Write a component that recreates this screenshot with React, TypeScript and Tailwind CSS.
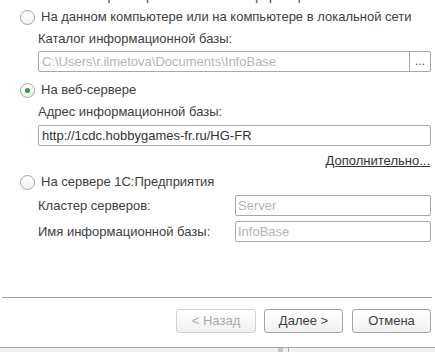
import React from "react";

function Radio({ checked }: { checked?: boolean }) {
  return (
    <span className="w-[15px] h-[15px] rounded-full border border-[#a3a3a3] bg-gradient-to-b from-white to-[#f3f3f3] flex items-center justify-center shrink-0">
      {checked && <span className="w-[5px] h-[5px] rounded-full bg-[#3a9a4a]" />}
    </span>
  );
}

function Btn({ children, disabled, w }: { children: React.ReactNode; disabled?: boolean; w: string }) {
  return (
    <div
      className={
        "h-[24px] rounded-[3px] border flex items-center justify-center bg-gradient-to-b from-white to-[#f1f1f1] " +
        w +
        " " +
        (disabled ? "border-[#d2d2d2] text-[#a9a9a9]" : "border-[#a5a5a5] text-[#404040]")
      }
    >
      {children}
    </div>
  );
}

export default function App() {
  return (
    <div
      className="relative w-[435px] h-[352px] bg-white overflow-hidden flex flex-col text-[13px] text-[#404040]"
      style={{ fontFamily: '"Liberation Sans", Arial, sans-serif' }}
    >
      <div className="flex-1 flex flex-col">
        <div className="h-[4px] overflow-hidden pl-[40px]">
          <div className="leading-[16px] -mt-[12px] whitespace-nowrap">
            Укажите вариант расположения информационной базы:
          </div>
        </div>
        <div className="h-[26px] flex items-center pl-[20px] gap-[6px]">
          <Radio />
          <span>На данном компьютере или на компьютере в локальной сети</span>
        </div>
        <div className="h-[18px] flex items-center pl-[38px]">Каталог информационной базы:</div>
        <div className="mt-[3px] h-[21px] ml-[38px] w-[393px] flex border border-[#a8a8a8] rounded-[2px]">
          <div className="flex-1 flex items-center pl-[3px] text-[#b5b5b5] overflow-hidden whitespace-nowrap">
            C:\Users\r.ilmetova\Documents\InfoBase
          </div>
          <div className="w-[21px] border-l border-[#a8a8a8] flex items-center justify-center text-[#555] text-[12px] leading-none pb-[2px]">
            ...
          </div>
        </div>
        <div className="mt-[5px] h-[26px] flex items-center pl-[20px] gap-[6px]">
          <Radio checked />
          <span>На веб-сервере</span>
        </div>
        <div className="h-[18px] flex items-center pl-[38px]">Адрес информационной базы:</div>
        <div className="mt-[4px] h-[21px] ml-[38px] w-[393px] flex items-center pl-[3px] border border-[#a8a8a8] rounded-[2px] text-[#333]">
          http://1cdc.hobbygames-fr.ru/HG-FR
        </div>
        <div className="mt-[6px] h-[18px] flex items-center justify-end pr-[5px]">
          <span className="underline text-[#333]">Дополнительно...</span>
        </div>
        <div className="h-[24px] flex items-center pl-[20px] gap-[6px]">
          <Radio />
          <span>На сервере 1С:Предприятия</span>
        </div>
        <div className="mt-[1px] h-[21px] flex items-center pl-[38px]">
          <span className="w-[197px]">Кластер серверов:</span>
          <div className="w-[196px] h-full flex items-center pl-[2px] border border-[#a8a8a8] rounded-[2px] text-[#b5b5b5]">
            Server
          </div>
        </div>
        <div className="mt-[5px] h-[21px] flex items-center pl-[38px]">
          <span className="w-[197px]">Имя информационной базы:</span>
          <div className="w-[196px] h-full flex items-center pl-[2px] border border-[#a8a8a8] rounded-[2px] text-[#b5b5b5]">
            InfoBase
          </div>
        </div>
      </div>
      <div className="h-[1px] ml-[2px] w-[430px] bg-[#a3a3a3]" />
      <div className="h-[49px] pt-[11px] flex justify-end pr-[4px]">
        <Btn w="w-[80px]" disabled>
          &lt; Назад
        </Btn>
        <div className="w-[8px]" />
        <Btn w="w-[79px]">Далее &gt;</Btn>
        <div className="w-[9px]" />
        <Btn w="w-[79px]">Отмена</Btn>
      </div>
      <div className="h-[1px] bg-[#a8a8a8]" />
      <div className="h-[4px] bg-[#f0f0f0] flex">
        <div className="w-[278px]" />
        <div className="w-[5px] bg-[#c8c8c8]" />
        <div className="w-[5px]" />
        <div className="w-[1px] bg-[#a8a8a8]" />
      </div>
    </div>
  );
}
